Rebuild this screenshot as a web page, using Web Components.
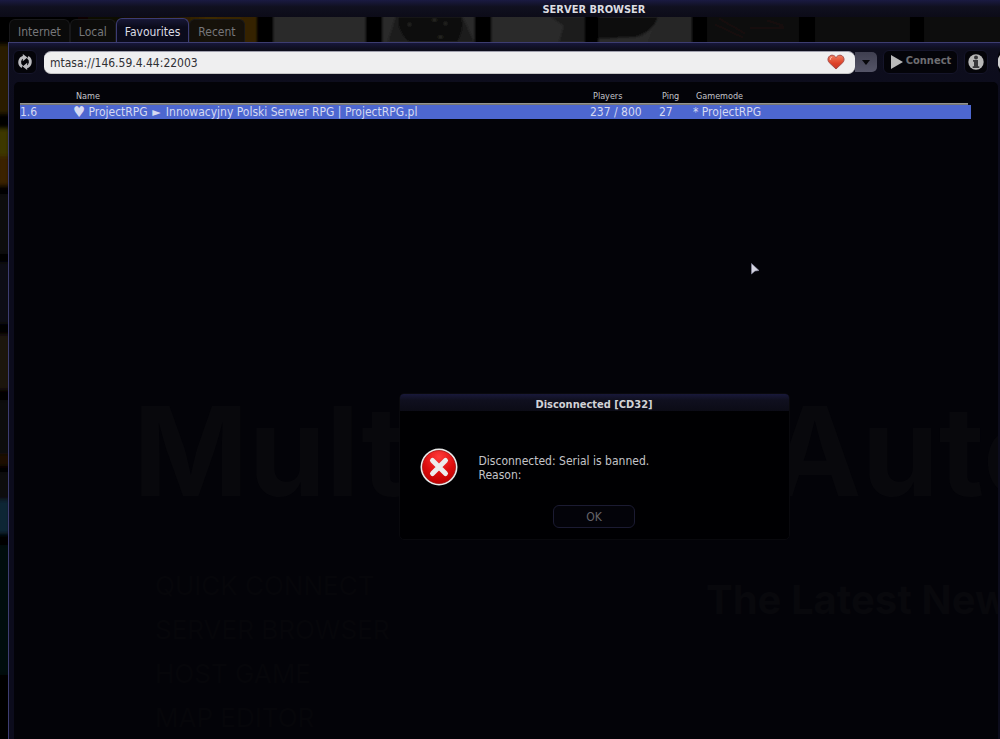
<!DOCTYPE html>
<html lang="en">
<head>
<meta charset="utf-8">
<title>Server browser</title>
<style>
html, body { height: 100%; }
body { margin: 0; background: #030308; overflow: hidden; color: #c4c4c8; font: 12px/14px "DejaVu Sans Condensed", "DejaVu Sans", sans-serif; }
</style>
</head>
<body>
<game-screen>
  <menu-backdrop slot="backdrop"></menu-backdrop>
  <browser-window heading="SERVER BROWSER">
    <tab-strip slot="tabs">
      <tab-item>Internet</tab-item>
      <tab-item>Local</tab-item>
      <tab-item selected>Favourites</tab-item>
      <tab-item>Recent</tab-item>
    </tab-strip>
    <address-bar address="mtasa://146.59.4.44:22003"></address-bar>
    <server-list></server-list>
  </browser-window>
  <message-box slot="overlay" heading="Disconnected [CD32]">Disconnected: Serial is banned.<br>Reason:</message-box>
  <mouse-pointer slot="pointer"></mouse-pointer>
</game-screen>

<script>
const define = (name, html, setup) => customElements.define(name, class extends HTMLElement {
  constructor() {
    super();
    const t = document.createElement('template');
    t.innerHTML = html;
    this.attachShadow({ mode: 'open' }).append(t.content.cloneNode(true));
  }
  connectedCallback() { if (setup) setup(this, this.shadowRoot); }
});

const setHeading = (host, root) => { root.querySelector('h1, h2').textContent = host.getAttribute('heading'); };

define('game-screen', `
<style>
:host { display: block; position: relative; min-height: 100vh; overflow: hidden; isolation: isolate; }
.overlay { position: absolute; top: 0; left: 0; width: 118.8%; height: 126.3%; display: grid; place-items: center; pointer-events: none; }
</style>
<slot name="backdrop"></slot>
<slot></slot>
<div class="overlay"><slot name="overlay"></slot></div>
<slot name="pointer"></slot>`);

define('menu-backdrop', `
<style>
:host { position: absolute; inset: 0; z-index: -1; background: #000; }
svg { position: absolute; top: 0; left: 0; }
</style>
<svg width="1000" height="739" aria-hidden="true">
  <defs>
    <filter id="soft" x="-10%" y="-10%" width="120%" height="120%"><feGaussianBlur stdDeviation="2"/></filter>
    <filter id="edge"><feGaussianBlur stdDeviation="1"/></filter>
    <linearGradient id="amber" x1="0" x2="1"><stop offset="0" stop-color="#020202"/><stop offset=".55" stop-color="#1c1305"/><stop offset=".75" stop-color="#3f2a02"/><stop offset="1" stop-color="#332202"/></linearGradient>
  </defs>
  <g filter="url(#edge)">
    <rect x="60" y="14" width="197" height="40" fill="url(#amber)"/>
    <rect x="273" y="10" width="93" height="50" fill="#2b2b2b"/>
    <rect x="382" y="10" width="93" height="50" fill="#292929"/>
    <path d="M388 42l8-26h66l12 26z" fill="#1c1c1c"/>
    <path d="M399 17q-3 12 10 25h48q8-14 4-25z" fill="#090908"/>
    <path d="M408 25l3-1M433 20h3M444 24l3-1M439 37h3" stroke="#33332e" stroke-width="2" fill="none"/>
    <rect x="491" y="10" width="94" height="50" fill="#2a2a2a"/>
    <path d="M551 17h34v25h-26l5-16z" fill="#1a1a1a"/>
    <rect x="598" y="10" width="94" height="50" fill="#292929"/>
    <path d="M598 17h60q-4 14-22 20l-38 2z" fill="#111"/>
    <path d="M658 17h34v25h-44z" fill="#252627"/>
    <rect x="707" y="10" width="92" height="50" fill="#0e0b09"/>
    <path d="M714 24l30 14M718 18l28 16M750 28h34M766 20l18 6" stroke="#120e0b" stroke-width="3"/>
    <rect x="815" y="10" width="95" height="50" fill="#0e0b08"/>
    <path d="M820 24l20 10M870 26l24-6M880 36l20-4" stroke="#080808" stroke-width="5"/>
    <rect x="924" y="10" width="80" height="50" fill="#0d0a09"/>
    <path d="M930 40l24-20M944 42l24-18M962 42l26-20" stroke="#0a0808" stroke-width="3"/>
  </g>
  <g filter="url(#soft)">
    <rect x="-4" y="44" width="14" height="70" fill="#2c1b04"/>
    <rect x="-4" y="128" width="14" height="28" fill="#3c3905"/>
    <rect x="-4" y="156" width="14" height="30" fill="#3a2104"/>
    <rect x="-4" y="194" width="14" height="60" fill="#0d0d0a"/>
    <rect x="-4" y="262" width="14" height="62" fill="#0b0f14"/>
    <rect x="-4" y="334" width="14" height="56" fill="#1a1308"/>
    <rect x="-4" y="400" width="14" height="66" fill="#100c0a"/>
    <rect x="-4" y="454" width="14" height="12" fill="#1c0805"/>
    <rect x="-4" y="472" width="14" height="30" fill="#0d0d0b"/>
    <rect x="-4" y="500" width="14" height="34" fill="#0b2734"/>
    <rect x="-4" y="545" width="14" height="130" fill="#03070a"/>
  </g>
</svg>`);

define('browser-window', `
<style>
:host { display: flex; flex-direction: column; min-height: 100vh; }
header { width: 118.8%; height: 17px; background: linear-gradient(#1a1a42, #10101f 40%, #0c0b18); text-align: center; }
h1 { margin: 0; font-size: 11px; line-height: 20px; color: #dcdce2; }
.tabs { padding: 1px 0 0 9px; }
main { flex: 1; display: flex; flex-direction: column; margin-left: 8px; border: solid #3d3d70; border-width: 1px 0 0 1px; background: linear-gradient(#17173a, #0e0e1d 6px, #0c0c1c 60px, #0c0c1c); }
</style>
<header><h1></h1></header>
<div class="tabs"><slot name="tabs"></slot></div>
<main><slot></slot></main>`, setHeading);

define('tab-strip', `
<style>:host { display: flex; align-items: flex-end; height: 24px; }</style>
<slot></slot>`);

define('tab-item', `
<style>
:host { display: block; }
button { display: block; height: 23px; padding: 2px 8px 0; margin: 0; border: 1px solid #18181a; border-bottom: 0; border-radius: 6px 6px 0 0; background: #0d0d0dcc; color: #77777a; font: inherit; }
:host([selected]) button { height: 24px; border-color: #3c3c74; background: linear-gradient(#171735, #0b0b1c 8px); color: #dcdce6; }
</style>
<button type="button"><slot></slot></button>`);

define('address-bar', `
<style>
:host { display: flex; align-items: center; box-sizing: border-box; height: 39px; padding: 0 0 1px 4px; overflow: hidden; }
button { box-sizing: border-box; height: 24px; margin: 0; padding: 0; border: 1px solid #15152a; border-radius: 6px; background: #040409; color: #6e6e72; font: bold 11px/14px "DejaVu Sans Condensed", "DejaVu Sans", sans-serif; display: flex; align-items: center; justify-content: center; flex: none; }
.square { width: 24px; }
.field { flex: 1; min-width: 0; height: 23px; box-sizing: border-box; display: flex; align-items: center; margin-left: 7px; padding: 0 10px 0 6px; border-radius: 7px; background: #efeff0; border-top: 1px solid #a0a0ad; border-bottom: 1px solid #c4c4c4; }
input { flex: 1; min-width: 0; height: 20px; padding: 2px 0 0; border: 0; outline: 0; background: none; color: #303034; font: inherit; }
.drop { width: 22px; height: 20px; border: 0; border-radius: 0 5px 5px 0; background: linear-gradient(#3f3f50, #555568); }
.connect { width: 75px; gap: 2px; margin: 0 6px; }
.connect span { margin-top: -2px; }
.more { width: 2px; overflow: hidden; margin-left: 10px; }
.more button { width: 24px; background: radial-gradient(circle at 10px 12px, #d0d0d0 10px, #030308 11px); border: 0; }
svg { display: block; flex: none; }
</style>
<button class="square" type="button" aria-label="Refresh">
  <svg width="16" height="16" viewBox="0 0 16 16"><g fill="none" stroke="#bcbcc0" stroke-width="2.800"><path d="M5.200 12.700A5.300 5.300 0 0 1 6.800 3"/><path d="M10.800 3.300A5.300 5.300 0 0 1 9.200 13"/></g><path d="M5.800 0l4.600 3.400-4.600 3.800zM10.200 16l-4.600-3.400 4.600-3.800z" fill="#bcbcc0"/></svg>
</button>
<div class="field">
  <input type="text" aria-label="Server address">
  <svg width="18" height="16" viewBox="0 0 18 16"><defs><linearGradient id="h" x2="0" y2="1"><stop stop-color="#ef7a5c"/><stop offset=".6" stop-color="#dd4128"/><stop offset="1" stop-color="#c23a2c"/></linearGradient></defs><path d="M9 15L2.200 8.600C-.3 5.800 1.300 1.200 5 1.200c1.900 0 3.200 1 4 2.500.8-1.500 2.100-2.500 4-2.500 3.700 0 5.300 4.600 2.800 7.400z" fill="url(#h)" stroke="#a44b48"/><path d="M3.200 6Q3 3.200 5.200 3" fill="none" stroke="#f8b9a5"/></svg>
</div>
<button class="drop" type="button" aria-label="Address history"><svg width="8" height="5"><path d="M0 0h8L4 5z" fill="#08080c"/></svg></button>
<button class="connect" type="button"><svg width="14" height="16"><path d="M1 1l12 7-12 7z" fill="#b9b9b9"/></svg><span>Connect</span></button>
<button class="square" type="button" aria-label="Server information">
  <svg width="16" height="16" viewBox="0 0 16 16"><circle cx="8" cy="8" r="7.700" fill="#b8b8b8"/><circle cx="8" cy="3.500" r="2" fill="#37373a"/><path d="M5 6h5v6.200h1.300V14H4.700v-1.800H6V7.800H5z" fill="#37373a"/></svg>
</button>
<div class="more"><button type="button" aria-label="More"></button></div>`,
(host, root) => { root.querySelector('input').value = host.getAttribute('address'); });

define('server-list', `
<style>
:host { display: block; position: relative; flex: 1; margin: 0 2px 0 5px; padding: 8px 27px 0 6px; border-radius: 5px 5px 0 0; background: #030308; overflow: hidden; }
table { position: relative; width: 100%; border-collapse: separate; border-spacing: 0; table-layout: fixed; }
th { height: 13px; padding: 0 3px 2px; font-size: 9px; line-height: 13px; font-weight: normal; text-align: left; background: linear-gradient(#a0a09c, #6c6c68) 0 100% / 100% 2px no-repeat; }
th:last-child { background-size: calc(100% - 3px) 2px; }
td { height: 14px; padding: 1px 0 0; box-sizing: border-box; line-height: 13px; white-space: nowrap; background: #4d67d0; color: #d5d9f2; }
.heart { display: inline-block; width: 12px; font-size: 15px; line-height: 13px; vertical-align: top; }
.arrow { margin: 0 2px 0 1px; }
.version { width: 53px; } .players { width: 69px; } .ping { width: 34px; } .mode { width: 278px; }
.ghost { position: absolute; inset: 0; overflow: hidden; font-family: Inter, sans-serif; white-space: nowrap; color: #08080c; display: grid; grid-template-columns: 565px 1fr; grid-template-rows: 160px auto; padding: 289px 0 0 119px; }
.ghost p { margin: 0; }
.logo { grid-column: span 2; display: grid; grid-template-columns: 636px 1fr; font-size: 124px; line-height: 160px; font-weight: 700; }
.menu { padding: 33px 0 0 22px; font-size: 26px; line-height: 44px; color: #06060a; }
.news { padding: 43px 0 0 8px; font-size: 40px; line-height: 52px; font-weight: 700; }
</style>
<div class="ghost" aria-hidden="true">
  <p class="logo"><span>Mult</span><span>Auto</span></p>
  <div class="menu"><p>QUICK CONNECT</p><p>SERVER BROWSER</p><p>HOST GAME</p><p>MAP EDITOR</p></div>
  <p class="news">The Latest News</p>
</div>
<table>
  <colgroup><col class="version"><col><col class="players"><col class="ping"><col class="mode"></colgroup>
  <thead><tr><th></th><th>Name</th><th>Players</th><th>Ping</th><th>Gamemode</th></tr></thead>
  <tbody><tr><td>1.6</td><td><span class="heart">♥</span> ProjectRPG <span class="arrow">►</span> Innowacyjny Polski Serwer RPG | ProjectRPG.pl</td><td>237 / 800</td><td>27</td><td>* ProjectRPG</td></tr></tbody>
</table>`);

define('message-box', `
<style>
:host { display: block; box-sizing: border-box; width: 391px; border: 1px solid #09090d; border-radius: 5px; background: #000002; overflow: hidden; pointer-events: auto; }
h2 { margin: -1px -1px 0; height: 18px; background: linear-gradient(#1a1a3e, #10101f 7px, #0b0b16); font-size: 11px; line-height: 24px; text-align: center; color: #d2d2d6; }
.body { display: flex; gap: 21px; padding: 37px 20px 0; height: 57px; }
p { margin: 6px 0 0; }
button { display: block; margin: 0 auto 11px; width: 82px; height: 23px; padding: 0; border: 1px solid #1b1b32; border-radius: 6px; background: #030309; color: #656569; font: inherit; }
</style>
<h2></h2>
<div class="body">
  <svg width="38" height="38" viewBox="0 0 38 38" role="img" aria-label="Error"><defs><radialGradient id="r" cy=".2" r=".8"><stop stop-color="#ff3b3b"/><stop offset=".6" stop-color="#dd0d0d"/><stop offset="1" stop-color="#c00000"/></radialGradient></defs><circle cx="19" cy="19" r="18.500" fill="#e9e9e9"/><circle cx="19" cy="19" r="16.500" fill="url(#r)" stroke="#a51212" stroke-width=".8"/><path d="M12.500 12.500l13 13M25.500 12.500l-13 13" stroke="#ececec" stroke-width="5" stroke-linecap="round"/></svg>
  <p><slot></slot></p>
</div>
<button type="button">OK</button>`, setHeading);

define('mouse-pointer', `
<style>:host { position: absolute; left: 751px; top: 263px; pointer-events: none; } svg { display: block; }</style>
<svg width="9" height="12" aria-hidden="true"><path d="M.5.5l7.500 7-4 .5-3.500 3z" fill="#d4d4e0" stroke="#8f8fa8" stroke-width=".6"/></svg>`);
</script>
</body>
</html>
